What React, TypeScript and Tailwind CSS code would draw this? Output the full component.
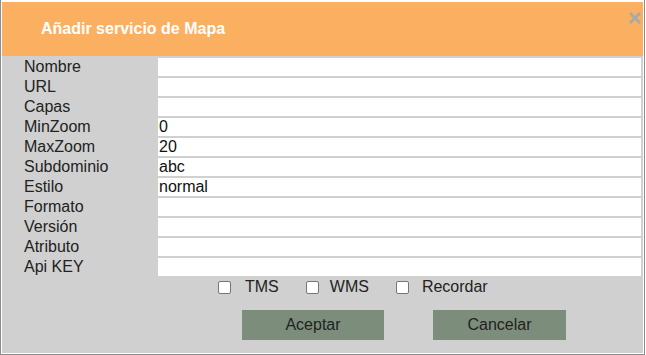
import React from "react";

const fields: [string, string][] = [
  ["Nombre", ""],
  ["URL", ""],
  ["Capas", ""],
  ["MinZoom", "0"],
  ["MaxZoom", "20"],
  ["Subdominio", "abc"],
  ["Estilo", "normal"],
  ["Formato", ""],
  ["Versión", ""],
  ["Atributo", ""],
  ["Api KEY", ""],
];

function Box() {
  return <span className="inline-block w-[13px] h-[13px] bg-white border border-[#767676] rounded-[2px]" />;
}

export default function App() {
  return (
    <div
      className="w-[646px] h-[355px] bg-white"
      style={{ fontFamily: '"Liberation Sans", Arial, sans-serif' }}
    >
      <div className="w-[645px] h-[355px] border-l border-r border-b border-[#8c8c8c] pt-[2px] px-[1px] pb-[1px] bg-white flex flex-col">
        <div className="relative h-[54px] bg-[#fbb061] flex items-center pl-[39px]">
          <span className="text-white font-bold text-[16px]">Añadir servicio de Mapa</span>
          <svg className="absolute right-[2px] top-[10px]" width="12" height="12" viewBox="0 0 12 12">
            <path d="M2 2 L10 10 M10 2 L2 10" stroke="#a9a9a9" strokeWidth="3" strokeLinecap="square" />
          </svg>
        </div>
        <div className="flex-1 bg-[#d0d0d0] flex flex-col">
          <div className="flex flex-col pt-[1px]">
            {fields.map(([label, value]) => (
              <div key={label} className="flex h-[20px] items-center">
                <div className="w-[156px] pl-[22px] text-[16px] text-[#222] leading-none">{label}</div>
                <div className="h-[18px] w-[483px] bg-white text-[16px] text-[#111] leading-[18px] pl-[1px]">
                  {value}
                </div>
              </div>
            ))}
          </div>
          <div className="flex items-center h-[20px] pl-[216px] text-[16px] text-[#222]">
            <Box />
            <span className="ml-[14px]">TMS</span>
            <span className="ml-[27px] flex"><Box /></span>
            <span className="ml-[11px]">WMS</span>
            <span className="ml-[27px] flex"><Box /></span>
            <span className="ml-[13px]">Recordar</span>
          </div>
          <div className="flex mt-[13px] pl-[240px]">
            <button className="w-[142px] h-[30px] bg-[#7c8e7b] text-[16px] text-[#222]">Aceptar</button>
            <button className="ml-[49px] w-[133px] h-[30px] bg-[#7c8e7b] text-[16px] text-[#222]">Cancelar</button>
          </div>
        </div>
      </div>
    </div>
  );
}
